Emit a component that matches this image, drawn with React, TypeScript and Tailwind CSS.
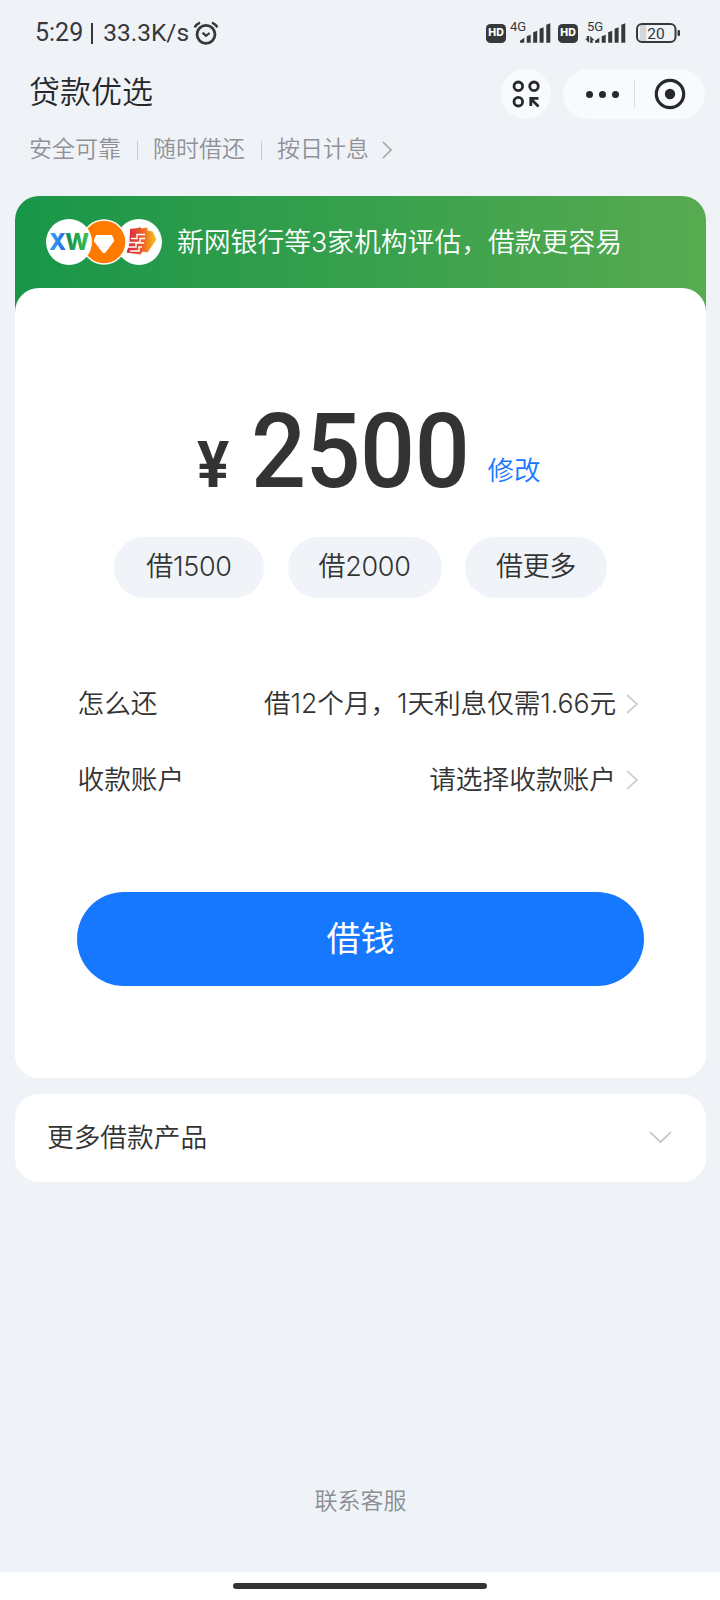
import type { ReactElement, ReactNode } from "react";

const FEATURES = ["安全可靠", "随时借还", "按日计息"];

const QUICK_AMOUNTS = [
  { label: "借1500", className: "w-[150px]" },
  { label: "借2000", className: "w-[154px]" },
  { label: "借更多", className: "w-[142px]" },
];

function AlarmIcon(): ReactElement {
  return (
    <svg className="ml-[4px] h-6 w-[26px]" viewBox="0 0 26 24" fill="none" stroke="#37383c">
      <circle cx="13" cy="13.3" r="9" strokeWidth="2.8" />
      <path d="M9.6 11.6 13 14.8l3.6-2.8" strokeWidth="2.2" />
      <path d="M1.6 6.4Q3.5 3 7 1.6M24.4 6.4Q22.5 3 19 1.6" strokeWidth="2.4" />
    </svg>
  );
}

function HdBadge(): ReactElement {
  return (
    <span className="flex h-[19px] w-5 items-center justify-center rounded-[4.5px] bg-[#37383c] font-[Inter,sans-serif] text-[10.5px] leading-none font-extrabold text-white">
      HD
    </span>
  );
}

function Signal({ label, arrows = false }: { label: string; arrows?: boolean }): ReactElement {
  return (
    <div className="relative h-6 w-[41px]">
      <span
        className={
          arrows
            ? "absolute -top-[1px] left-[2px] text-[13px] leading-none"
            : "absolute -top-[1px] left-0 text-[13px] leading-none"
        }
      >
        {label}
      </span>
      <svg className="absolute inset-0" width="41" height="24" viewBox="0 0 41 24" fill="#37383c">
        <path d="M10 21.7v-2l4.3-3v5zM16.7 21.7v-6.500l4-1.500v8zM23.200 21.700V11.200l4-1.500v12zM29.600 21.700V7.800l4-1.500v15.400zM36.300 21.700V3.800l4-1.500v19.400z" />
        {arrows && <path d="M4.200 15v7L0 17.700h1.900V15zM5.300 22v-7l4.200 4.300H7.600V22z" />}
      </svg>
    </div>
  );
}

function StatusBar(): ReactElement {
  return (
    <div className="flex h-[65px] pr-[39px] pl-[35px] text-[#37383c]">
      <div className="flex h-[66px] items-center text-[25px] font-[450]">
        <span>5:29</span>
        <span className="mx-[8px] h-[21px] w-[2px] bg-[#37383c]" />
        <span className="ml-[2px] text-[24.5px]">33.3K/s</span>
        <AlarmIcon />
      </div>
      <div className="ml-auto flex h-[66px] items-center">
        <HdBadge />
        <span className="w-[4px]" />
        <Signal label="4G" />
        <span className="w-[7px]" />
        <HdBadge />
        <span className="w-[7px]" />
        <Signal label="5G" arrows />
        <svg className="ml-[10px] h-5 w-[45px]" viewBox="0 0 45 20">
          <rect x="4" y="2" width="6" height="16" fill="#d4d6da" />
          <rect x="1" y="1" width="38.5" height="18" rx="5" fill="none" stroke="#37383c" strokeWidth="2" />
          <rect x="41.5" y="7" width="2.5" height="6" rx="1" fill="#37383c" />
          <text x="20" y="15.5" textAnchor="middle" fontSize="15.5" fill="#37383c">
            20
          </text>
        </svg>
      </div>
    </div>
  );
}

function Header(): ReactElement {
  return (
    <div className="flex h-[58px] items-center pr-[15px] pl-[29px]">
      <h1 className="pb-[3px] text-[31px] leading-none font-[350] text-[#27282b]">贷款优选</h1>
      <button
        className="ml-auto flex h-[50px] w-[50px] items-center justify-center rounded-full bg-[#f8fafb]"
        aria-label="小程序"
      >
        <svg width="28" height="28" viewBox="0 0 28 28" fill="none" stroke="#27282b" strokeWidth="2.8">
          <circle cx="6.3" cy="6.3" r="4.3" />
          <circle cx="22" cy="6.3" r="4.3" />
          <circle cx="6.3" cy="21.7" r="4.3" />
          <path d="m26.500 26.500-7-7M18.800 26v-7.700H26.500" />
        </svg>
      </button>
      <div className="ml-3 flex h-[50px] w-[142px] items-center rounded-full bg-[#f8fafb]">
        <button className="flex w-[71px] justify-center gap-[6px] pl-[7px]" aria-label="更多">
          <span className="h-[7px] w-[7px] rounded-full bg-[#27282b]" />
          <span className="h-[7px] w-[7px] rounded-full bg-[#27282b]" />
          <span className="h-[7px] w-[7px] rounded-full bg-[#27282b]" />
        </button>
        <span className="h-7 w-px bg-[#dddfe2]" />
        <button className="flex w-[70px] justify-center" aria-label="关闭">
          <svg width="32" height="32" viewBox="0 0 32 32">
            <circle cx="16" cy="16" r="13.7" fill="none" stroke="#27282b" strokeWidth="3.2" />
            <circle cx="16" cy="16" r="5.2" fill="#27282b" />
          </svg>
        </button>
      </div>
    </div>
  );
}

function Chevron(): ReactElement {
  return (
    <svg className="ml-[10px] h-5 w-3" viewBox="0 0 12 20" fill="none" stroke="#cdced1" strokeWidth="1.7">
      <path d="m1 1 10 9L1 19" />
    </svg>
  );
}

function Features(): ReactElement {
  return (
    <div className="flex h-[73px] items-start pt-[13px] pl-[29px] text-[23px] leading-[28px] font-[350] text-[#8f9196]">
      {FEATURES.map((feature, index) => (
        <div key={feature} className="flex items-center">
          {index > 0 && <span className="mx-[15.5px] h-[19px] w-px bg-[#c9cbd0]" />}
          <span>{feature}</span>
        </div>
      ))}
      <svg
        className="mt-[5px] ml-[13px]"
        width="11"
        height="18"
        viewBox="0 0 11 18"
        fill="none"
        stroke="#a5a7ab"
        strokeWidth="1.7"
      >
        <path d="m1 1 8 8-8 8" />
      </svg>
    </div>
  );
}

function BankLogos(): ReactElement {
  return (
    <svg width="116" height="46" viewBox="0 0 116 46">
      <defs>
        <linearGradient id="xw" x1="0" x2="1">
          <stop offset="0" stopColor="#2aa9f0" />
          <stop offset=".38" stopColor="#2b6fe0" />
          <stop offset=".45" stopColor="#12905a" />
          <stop offset="1" stopColor="#3fc04a" />
        </linearGradient>
        <linearGradient id="fan" x1="0" x2="1">
          <stop offset="0" stopColor="#d81e43" />
          <stop offset=".5" stopColor="#ec5a28" />
          <stop offset="1" stopColor="#f9c81c" />
        </linearGradient>
      </defs>
      <circle cx="93" cy="23" r="23" fill="#fff" />
      <path d="m84 10 8-1 1.500-1 2 1.500 6-1v3l5 1 4 8-9 13-5-1-2 3-14-2 3-9z" fill="url(#fan)" />
      <path
        d="M99 15.500H91v4h-6M99 19.500h-5v4H83M98 24h-8v4h-8M96 28h-3v4h-9"
        fill="none"
        stroke="#fff"
        strokeWidth="1.4"
      />
      <circle cx="58" cy="23" r="22" fill="#ff7a00" stroke="#fff" strokeWidth="1.5" />
      <path
        d="M51 16h14q1 0 1.500 1l1.500 4q.4 1-.3 1.800L59.500 33.500q-1.500 1.500-3 0l-8.200-10.700q-.7-.8-.3-1.800l1.500-4q.5-1 1.500-1z"
        fill="#fff"
      />
      <circle cx="23" cy="23" r="23" fill="#fff" />
      <text
        x="22.5"
        y="30.5"
        textAnchor="middle"
        fontFamily="Inter, sans-serif"
        fontSize="22.5"
        fontWeight="800"
        letterSpacing="-1"
        fill="url(#xw)"
      >
        XW
      </text>
    </svg>
  );
}

function InfoRow({ label, children }: { label: string; children: ReactNode }): ReactElement {
  return (
    <div className="flex h-[76px] items-center pr-[5.5px] text-[26.7px] font-[350] text-[#333]">
      <span>{label}</span>
      <span className="ml-auto">{children}</span>
      <Chevron />
    </div>
  );
}

function LoanCard(): ReactElement {
  return (
    <section className="rounded-3xl bg-white">
      <div className="h-[116px] rounded-t-3xl bg-linear-to-r from-[#179648] via-[#36a04d] to-[#57ab50]">
        <div className="flex h-[92px] items-center pl-[31px] text-white">
          <BankLogos />
          <span className="ml-[15px] font-[Inter,'Noto_Sans_CJK_SC',sans-serif] text-[26.8px] font-[350]">
            新网银行等3家机构评估，借款更容易
          </span>
        </div>
      </div>
      <div className="-mt-6 h-[790px] rounded-3xl bg-white px-[62.5px]">
        <div className="flex h-[249px] items-baseline pt-[112px] leading-none text-[#333]">
          <span className="w-[56px] pl-[119px] text-[64px] font-bold">
            <span className="inline-block origin-left scale-x-[.94]">¥</span>
          </span>
          <span className="ml-[54px] w-[237px] origin-left scale-x-[.94] text-[103px] font-medium tracking-[-0.5px]">
            2500
          </span>
          <a className="relative -top-[7px] text-[26.5px] font-[350] text-[#1677ff]">修改</a>
        </div>
        <div className="-mx-[62px] flex h-[61px] justify-center gap-[23.5px]">
          {QUICK_AMOUNTS.map(({ label, className }) => (
            <button
              key={label}
              className={`${className} rounded-full bg-[#f0f3f8] font-[Inter,'Noto_Sans_CJK_SC',sans-serif] text-[27px] font-[350] tracking-[-0.3px] text-[#333]`}
            >
              {label}
            </button>
          ))}
        </div>
        <div className="mt-[68px]">
          <InfoRow label="怎么还">
            <span className="font-[Inter,'Noto_Sans_CJK_SC',sans-serif] tracking-[-0.1px]">
              借12个月，1天利息仅需1.66元
            </span>
          </InfoRow>
          <InfoRow label="收款账户">请选择收款账户</InfoRow>
        </div>
        <button className="mt-[74px] -ml-[0.5px] h-[94px] w-[567px] rounded-full bg-[#1677ff] text-[34px] text-white">
          借钱
        </button>
      </div>
    </section>
  );
}

export default function App(): ReactElement {
  return (
    <div
      lang="zh-CN"
      className="flex h-[1600px] w-[720px] flex-col overflow-hidden bg-[#eff3f8] font-[Roboto,'Noto_Sans_CJK_SC',sans-serif]"
    >
      <StatusBar />
      <Header />
      <Features />
      <main className="mr-[14px] ml-[15px] flex flex-col gap-[15.5px]">
        <LoanCard />
        <section className="flex h-[88px] items-center rounded-3xl bg-white pt-[2px] pr-[34px] pl-8 text-[26.7px] font-[350] text-[#333]">
          <span>更多借款产品</span>
          <svg
            className="mb-[2px] ml-auto"
            width="23"
            height="13"
            viewBox="0 0 23 13"
            fill="none"
            stroke="#c0c1c4"
            strokeWidth="1.7"
          >
            <path d="m1 1 10.500 10L22 1" />
          </svg>
        </section>
      </main>
      <footer className="mt-auto">
        <p className="mb-[53px] pl-px text-center text-[23px] leading-[34px] font-[350] text-[#8b8d92]">联系客服</p>
        <div className="flex h-7 justify-center bg-white pt-[11px]">
          <span className="h-[6px] w-[254px] rounded-full bg-[#333]" />
        </div>
      </footer>
    </div>
  );
}
